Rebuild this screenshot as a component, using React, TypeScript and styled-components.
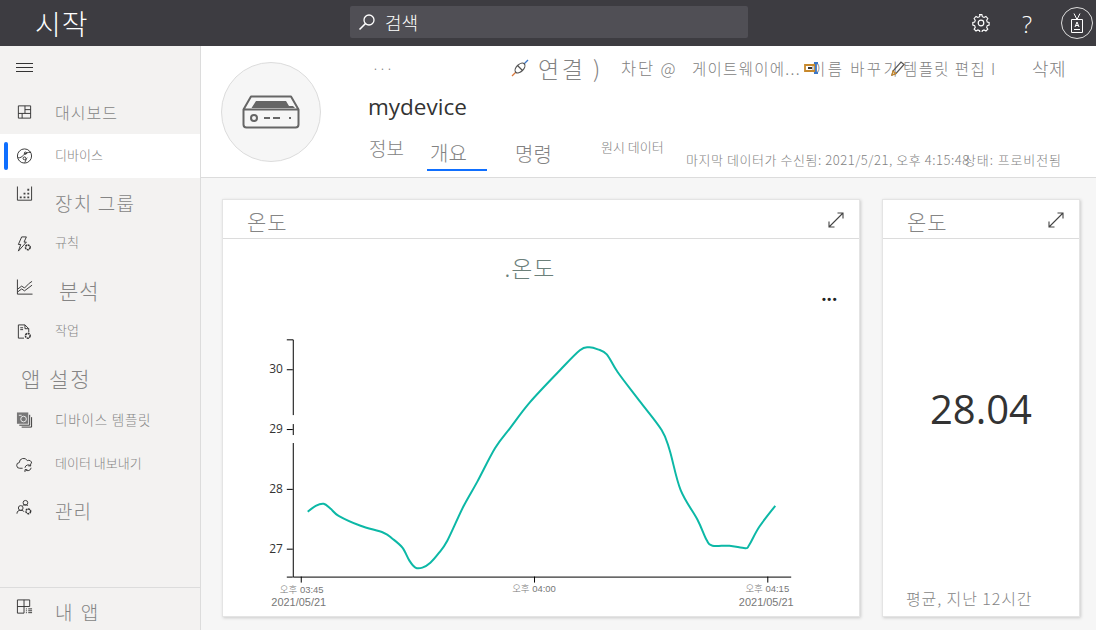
import styled, { createGlobalStyle } from "styled-components";

const KO = `"Noto Sans CJK KR", "Open Sans", sans-serif`;

const GlobalStyle = createGlobalStyle`
  html, body {
    margin: 0;
    height: 100%;
    overflow: hidden;
    font-family: ${KO};
    font-weight: 300;
  }
  * { box-sizing: border-box; }
`;

// chart line, read off the screenshot
const points: [number, number][] = [
  [307, 512], [315, 506], [323, 504], [330, 509], [338, 516], [360, 526], [383, 533],
  [392, 539], [402, 548], [409, 561], [415, 568], [422, 568], [430, 563], [438, 554],
  [447, 541], [463, 507], [477, 482], [495, 448], [510, 428], [530, 402], [560, 370],
  [580, 350], [589, 347], [598, 349], [607, 354], [618, 372], [640, 401], [662, 430],
  [670, 450], [681, 490], [698, 520], [707, 540], [713, 546], [730, 546], [746, 548.5],
  [750, 545], [760, 527], [776, 506],
];

const makeLine = (pts: [number, number][]) => {
  let d = `M${pts[0][0]} ${pts[0][1]}`;
  for (let i = 0; i < pts.length - 1; i++) {
    const p0 = pts[Math.max(i - 1, 0)];
    const p1 = pts[i];
    const p2 = pts[i + 1];
    const p3 = pts[Math.min(i + 2, pts.length - 1)];
    const c1x = p1[0] + (p2[0] - p0[0]) / 6;
    const c1y = p1[1] + (p2[1] - p0[1]) / 6;
    const c2x = p2[0] - (p3[0] - p1[0]) / 6;
    const c2y = p2[1] - (p3[1] - p1[1]) / 6;
    d += ` C${c1x} ${c1y} ${c2x} ${c2y} ${p2[0]} ${p2[1]}`;
  }
  return d;
};

const I = { fill: "none", stroke: "#333", strokeWidth: 1 };

const navIcons: Record<string, React.ReactNode> = {
  dashboard: (
    <svg width="18" height="18" viewBox="0 0 18 18" {...I}>
      <path d="M2.5 2.5h13v13h-13zM2.5 10.5h13M9.5 2.5v8M6.5 10.5v5M9.5 6.5h6" />
    </svg>
  ),
  device: (
    <svg width="18" height="18" viewBox="0 0 18 18" {...I}>
      <circle cx="9" cy="9" r="7.5" />
      <path d="M2 11c3 0 4-1 6-3s4-3 8-3M9 16c2-2 1-4 3-5" />
      <circle cx="9" cy="11.5" r="1.5" />
      <circle cx="10" cy="6" r="1.2" />
    </svg>
  ),
  groups: (
    <svg width="18" height="18" viewBox="0 0 18 18" {...I}>
      <path d="M1.5 0v14.5h15V0" />
      <path d="M4 10.5h2v2H4zM8 10.5h2v2H8zM12 10.5h2v2h-2zM8 6.5h2v2H8zM12 6.5h2v2h-2zM12 2.5h2v2h-2z" fill="#444" stroke="none" />
    </svg>
  ),
  rules: (
    <svg width="18" height="18" viewBox="0 0 18 18" {...I}>
      <path d="M6 1.5h5L8.5 7H11L2.5 16.5 5 9.5H2.5z" />
      <circle cx="12.5" cy="12.5" r="2.5" strokeWidth="1.6" strokeDasharray="2 .6" />
    </svg>
  ),
  analytics: (
    <svg width="18" height="18" viewBox="0 0 18 18" {...I}>
      <path d="M1.5 0v15.5h16" />
      <path d="M2 10l4-3 3 2 5-5 3-2M2 13l4-3 3 2 8-6" />
    </svg>
  ),
  jobs: (
    <svg width="18" height="18" viewBox="0 0 18 18" {...I}>
      <path d="M2.5 15.5v-14h7l4 4v4M2.5 15.5h6M9.5 1.5v4h4M4.5 4.5h3M4.5 6.5h3" />
      <circle cx="12.5" cy="13" r="2.5" strokeWidth="1.6" strokeDasharray="2 .6" />
    </svg>
  ),
  templates: (
    <svg width="18" height="18" viewBox="0 0 18 18" {...I}>
      <rect x="1" y="1" width="12" height="12" fill="#777" stroke="none" />
      <path d="M14.5 3.5v11h-11M16.5 6v10.5H6" />
      <circle cx="8" cy="8" r="3" stroke="#eee" />
      <path d="M3 4h3" stroke="#eee" />
    </svg>
  ),
  exports: (
    <svg width="18" height="18" viewBox="0 0 18 18" {...I}>
      <path d="M7 13.5H4a3 3 0 0 1-.5-6A4.5 4.5 0 0 1 12 5.5a3 3 0 0 1 4.5 3" />
      <path d="M9.5 13a3.5 3.5 0 0 1 6-2M16 13a3.5 3.5 0 0 1-6 2M15.5 8.5V11H13M9.5 17.5V15H12" />
    </svg>
  ),
  admin: (
    <svg width="18" height="18" viewBox="0 0 18 18" {...I}>
      <circle cx="10" cy="3.5" r="2.5" />
      <circle cx="5" cy="9" r="2.5" />
      <path d="M1 15c0-3 2-3.500 4-3.500s3 .5 3.500 1.500M7 6.500c1-1 4-1.500 5.500 0" />
      <circle cx="13" cy="12.500" r="2.500" strokeWidth="1.6" strokeDasharray="2 .6" />
    </svg>
  ),
  apps: (
    <svg width="18" height="18" viewBox="0 0 18 18" {...I}>
      <path d="M1.500 1.500h13v7M1.500 1.500v14h7M1.500 8.500h13M8.500 1.500v14" />
      <path d="M10.500 11h1M10.500 13h1M10.500 15h1M13 11h4M13 13h4M13 15h4" />
    </svg>
  ),
};

const navItems = [
  { key: "dashboard", label: "대시보드", size: 16, spacing: 1, shift: 1 },
  { key: "device", label: "디바이스", size: 13, spacing: 0, shift: -1, active: true },
  { key: "groups", label: "장치 그룹", size: 19, spacing: 1.2, shift: 3, iconShift: -5 },
  { key: "rules", label: "규칙", size: 13, spacing: 0, shift: -2 },
  { key: "analytics", label: "분석", size: 21, spacing: 1, shift: 3, indent: 4 },
  { key: "jobs", label: "작업", size: 13, spacing: 0, shift: -2 },
  { heading: true, key: "settings", label: "앱 설정", size: 21, spacing: 2, shift: 3 },
  { key: "templates", label: "디바이스 템플릿", size: 13.5, spacing: 0.8, shift: 0 },
  { key: "exports", label: "데이터 내보내기", size: 13, spacing: 0, shift: -1 },
  { key: "admin", label: "관리", size: 19, spacing: 1, shift: 3 },
];

const App = () => {
  return (
    <Page>
      <GlobalStyle />
      <TopBar>
        <AppTitle>시작</AppTitle>
        <SearchBox>
          <svg width="18" height="18" viewBox="0 0 18 18" fill="none" stroke="#fff" strokeWidth="1.3">
            <circle cx="11" cy="7" r="5" />
            <path d="M7.500 10.500L1.500 16.500" strokeWidth="1.600" />
          </svg>
          <span>검색</span>
        </SearchBox>
        <TopActions>
          <svg width="18" height="18" viewBox="0 0 18 18" fill="none" stroke="#fff" strokeWidth="1.200">
            <circle cx="9" cy="9" r="2.800" />
            <path d="M7.500 1.200h3l.5 2.200 1.800.8 2-1.100 2 2.200-1.200 1.900.6 1.800 2 .6v2.700l-2 .6-.6 1.800 1.200 1.900-2 2-2-1.100-1.800.8-.5 2.200" transform="translate(0 -.5) scale(.94)" />
            <path d="M7.500 1.200l-.5 2.200-1.800.8-2-1.100-2 2.200 1.200 1.900-.6 1.800-2 .6v2.700l2 .6.6 1.800-1.200 1.900 2 2 2-1.100 1.800.8.500 2.200h3" transform="translate(1 -.5) scale(.94)" />
          </svg>
          <HelpMark>?</HelpMark>
          <UserBadge>
            <svg width="14" height="20" viewBox="0 0 14 20" fill="none" stroke="#fff" strokeWidth="1">
              <path d="M1.500 6.500h11v13h-11zM4 .500l3 6 3-6" />
              <path d="M5 14l2-5 2 5M5.800 12.500h2.400M4 16.500h6" />
            </svg>
          </UserBadge>
        </TopActions>
      </TopBar>

      <Body>
        <Sidebar>
          <MenuToggle>
            <svg width="17" height="10" viewBox="0 0 17 10" stroke="#333" strokeWidth="1">
              <path d="M0 .5h17M0 4.500h17M0 8.500h17" />
            </svg>
          </MenuToggle>
          {navItems.map((item) => (
            <NavRow key={item.key} $active={item.active} $heading={item.heading}>
              {!item.heading && (
                <NavIcon $shift={item.iconShift ?? 0}>{navIcons[item.key]}</NavIcon>
              )}
              <NavLabel
                $size={item.size}
                $spacing={item.spacing}
                $shift={item.shift}
                $indent={item.indent ?? 0}
              >
                {item.label}
              </NavLabel>
            </NavRow>
          ))}
          <SidebarFooter>
            <NavIcon $shift={-2}>{navIcons.apps}</NavIcon>
            <NavLabel $size={19} $spacing={2} $shift={3} $indent={0}>
              내 앱
            </NavLabel>
          </SidebarFooter>
        </Sidebar>

        <Main>
          <DeviceHeader>
            <Avatar>
              <svg width="58" height="34" viewBox="0 0 58 34" fill="none" stroke="#666" strokeWidth="2">
                <path d="M1.500 14.500L9 1.500h40l7.500 13v15a3 3 0 0 1-3 3h-49a3 3 0 0 1-3-3zM1.500 14.500h55" strokeLinejoin="round" />
                <path d="M9.500 13L14 6h30l3 5h4l2 2z" fill="#666" stroke="none" />
                <circle cx="12" cy="23" r="3" />
                <path d="M22 23h6M31 23h7M47 23h2" />
              </svg>
            </Avatar>
            <DeviceInfo>
              <Toolbar>
                <ToolItem $width={139} $size={13}>
                  ···
                </ToolItem>
                <ToolItem $width={110} $size={23} $spacing={2.5}>
                  <svg width="18" height="18" viewBox="0 0 18 18" fill="none" strokeWidth="1.200">
                    <path d="M1 17l4-4" stroke="#d9773a" />
                    <path d="M13 5l4-4" stroke="#3c78c8" />
                    <ellipse cx="9" cy="9" rx="6" ry="3.500" transform="rotate(-45 9 9)" stroke="#555" />
                    <path d="M6.500 6.500l5 5" stroke="#555" />
                  </svg>
                  <span>연결 )</span>
                </ToolItem>
                <ToolItem $width={71} $size={16.5} $spacing={1.8}>
                  차단 @
                </ToolItem>
                <ToolItem $width={112} $size={15.5} $spacing={1.3}>
                  게이트웨이에...
                </ToolItem>
                <ToolItem $width={87} $size={15.5} $spacing={2.4}>
                  <svg width="16" height="12" viewBox="0 0 16 12" fill="none" strokeWidth="1.800">
                    <path d="M1 3h10v6H1z" stroke="#c8892c" />
                    <path d="M4 6h4" stroke="#222" />
                    <path d="M12 1v10M10 1h4M10 11h4" stroke="#3c78c8" />
                  </svg>
                  <Overlapped $by={-9}>이름 바꾸기</Overlapped>
                </ToolItem>
                <ToolItem $width={141} $size={15.5} $spacing={1.4}>
                  <svg width="14" height="16" viewBox="0 0 14 16" fill="none" strokeWidth="1.200">
                    <path d="M1 15l1-4 8-9 3 2.500-8 9z" stroke="#555" />
                    <path d="M1 15l1-4 3 2.500z" stroke="#c8892c" />
                  </svg>
                  <Overlapped $by={-2}>템플릿 편집 I</Overlapped>
                </ToolItem>
                <ToolItem $width={40} $size={18} $spacing={0.5}>
                  삭제
                </ToolItem>
              </Toolbar>
              <DeviceName>mydevice</DeviceName>
              <Tabs>
                <Tab $width={59} $size={19} $top={8} $indent={1}>
                  정보
                </Tab>
                <Tab $width={60} $size={20} $top={12} $indent={3} $selected>
                  개요
                </Tab>
                <Tab $width={114} $size={20} $top={13} $indent={28}>
                  명령
                </Tab>
                <Tab $width={85} $size={13} $top={11} $indent={0}>
                  원시 데이터
                </Tab>
                <Tab $width={278} $size={13} $top={24} $indent={0} $spacing={0.55}>
                  마지막 데이터가 수신됨: 2021/5/21, 오후 4:15:48
                </Tab>
                <Tab $width={98} $size={13} $top={24} $indent={0} $spacing={0.9}>
                  상태: 프로비전됨
                </Tab>
              </Tabs>
            </DeviceInfo>
          </DeviceHeader>

          <CardArea>
            <ChartCard>
              <CardHeader>
                <CardTitle>온도</CardTitle>
                <ExpandIcon />
              </CardHeader>
              <ChartHeading>.온도</ChartHeading>
              <ChartMore>•••</ChartMore>
              <ChartSvg viewBox="222 280 638 337" width="636" height="337">
                <path d="M286 339.500h6.500V415M292.500 424v11M292.500 443v134.500H792" fill="none" stroke="#000" />
                <path d="M286 369.500h6M286 429.500h6M286 489.500h6M286 549.500h6M286 577.500h6M300.500 577v6M534.500 577v6M768.500 577v6" stroke="#000" />
                <g fontFamily="'Open Sans', sans-serif" fontSize="12" fill="#333" textAnchor="end" fontWeight="400">
                  <text x="282" y="373">30</text>
                  <text x="282" y="433">29</text>
                  <text x="282" y="493">28</text>
                  <text x="282" y="553">27</text>
                </g>
                <g fontSize="9.500" fill="#777" textAnchor="middle" fontFamily={`"Liberation Sans", "Noto Sans CJK KR", sans-serif`}>
                  <text x="301" y="593">오후 03:45</text>
                  <text x="534" y="592">오후 04:00</text>
                  <text x="768" y="592">오후 04:15</text>
                </g>
                <g fontSize="11" fill="#777" textAnchor="middle" fontFamily={`"Liberation Sans", sans-serif`}>
                  <text x="298" y="607">2021/05/21</text>
                  <text x="767" y="607">2021/05/21</text>
                </g>
                <path d={makeLine(points)} fill="none" stroke="#0cb8a6" strokeWidth="2" />
              </ChartSvg>
            </ChartCard>

            <StatCard>
              <CardHeader>
                <CardTitle>온도</CardTitle>
                <ExpandIcon />
              </CardHeader>
              <StatValue>28.04</StatValue>
              <StatNote>평균, 지난 12시간</StatNote>
            </StatCard>
          </CardArea>
        </Main>
      </Body>
    </Page>
  );
};

const ExpandIcon = () => (
  <ExpandButton>
    <svg width="16" height="16" viewBox="0 0 16 16" fill="none" stroke="#444" strokeWidth="1.100">
      <path d="M1 15L15 1M9.500 1H15v5.500M1 9.500V15h5.500" />
    </svg>
  </ExpandButton>
);

export default App;

const Page = styled.div`
  width: 1096px;
  height: 630px;
  display: flex;
  flex-direction: column;
  overflow: hidden;
  background: #fff;
`;

const TopBar = styled.header`
  height: 46px;
  flex: none;
  display: flex;
  align-items: center;
  background: #3d3c41;
  color: #fff;
`;

const AppTitle = styled.div`
  width: 350px;
  padding-left: 35px;
  font-size: 28px;
  letter-spacing: 1px;
  line-height: 46px;
  margin-top: -1px;
`;

const SearchBox = styled.div`
  width: 398px;
  height: 32px;
  margin-top: -2px;
  display: flex;
  align-items: center;
  gap: 9px;
  padding-left: 8px;
  border-radius: 2px;
  background: #504f55;
  font-size: 18px;
`;

const TopActions = styled.div`
  flex: 1;
  display: flex;
  align-items: center;
  padding-left: 224px;
`;

const HelpMark = styled.span`
  margin-left: 32px;
  font-family: "Open Sans", sans-serif;
  font-size: 24px;
  width: 30px;
`;

const UserBadge = styled.div`
  width: 32px;
  height: 32px;
  margin-left: 9px;
  border: 1px solid #ddd;
  border-radius: 50%;
  display: flex;
  align-items: center;
  justify-content: center;
`;

const Body = styled.div`
  flex: 1;
  display: flex;
  min-height: 0;
`;

const Sidebar = styled.nav`
  width: 201px;
  flex: none;
  display: flex;
  flex-direction: column;
  background: #f3f2f1;
  border-right: 1px solid #dcdcdc;
`;

const MenuToggle = styled.div`
  height: 44px;
  flex: none;
  display: flex;
  align-items: center;
  padding-left: 16px;
`;

const NavRow = styled.div<{ $active?: boolean; $heading?: boolean }>`
  position: relative;
  height: 44px;
  flex: none;
  display: flex;
  align-items: center;
  gap: 22px;
  padding-left: ${(p) => (p.$heading ? 21 : 16)}px;
  background: ${(p) => (p.$active ? "#fff" : "transparent")};

  ${(p) =>
    p.$active &&
    `&::before {
      content: "";
      position: absolute;
      left: 4px;
      top: 8px;
      width: 4px;
      height: 28px;
      border-radius: 2px;
      background: #0f6fff;
    }`}
`;

const NavIcon = styled.span<{ $shift: number }>`
  width: 17px;
  height: 18px;
  flex: none;
  display: flex;
  margin-top: ${(p) => p.$shift * 2}px;
`;

const NavLabel = styled.span<{ $size: number; $spacing: number; $shift: number; $indent: number }>`
  font-size: ${(p) => p.$size}px;
  letter-spacing: ${(p) => p.$spacing}px;
  margin-top: ${(p) => p.$shift * 2 - 2}px;
  margin-left: ${(p) => p.$indent}px;
  color: #858585;
  white-space: nowrap;
`;

const SidebarFooter = styled.div`
  margin-top: auto;
  height: 43px;
  flex: none;
  display: flex;
  align-items: center;
  gap: 22px;
  padding-left: 16px;
  border-top: 1px solid #dcdcdc;
`;

const Main = styled.main`
  flex: 1;
  min-width: 0;
  display: flex;
  flex-direction: column;
`;

const DeviceHeader = styled.section`
  height: 132px;
  flex: none;
  display: flex;
  padding: 16px 0 0 20px;
  border-bottom: 1px solid #dcdcdc;
`;

const Avatar = styled.div`
  width: 100px;
  height: 100px;
  flex: none;
  display: flex;
  align-items: center;
  justify-content: center;
  border-radius: 50%;
  border: 1px solid #dcdcdc;
  background: #f6f6f6;
`;

const DeviceInfo = styled.div`
  margin: -16px 0 0 47px;
  min-width: 0;
  flex: 1;
`;

const Toolbar = styled.div`
  height: 44px;
  display: flex;
  align-items: center;
  padding-left: 4px;
`;

const ToolItem = styled.div<{ $width: number; $size: number; $spacing?: number }>`
  width: ${(p) => p.$width}px;
  flex: none;
  display: flex;
  align-items: center;
  gap: 9px;
  font-size: ${(p) => p.$size}px;
  letter-spacing: ${(p) => p.$spacing ?? 0}px;
  color: #828282;
  white-space: nowrap;

  svg {
    position: relative;
    z-index: 1;
    flex: none;
  }
`;

const Overlapped = styled.span<{ $by: number }>`
  margin-left: ${(p) => p.$by - 9}px;
`;

const DeviceName = styled.div`
  height: 36px;
  font-family: "Open Sans", sans-serif;
  font-size: 22.5px;
  font-weight: 400;
  line-height: 34px;
  color: #333;
`;

const Tabs = styled.div`
  display: flex;
  align-items: flex-start;
  height: 51px;
`;

const Tab = styled.div<{
  $width: number;
  $size: number;
  $top: number;
  $indent: number;
  $spacing?: number;
  $selected?: boolean;
}>`
  position: relative;
  width: ${(p) => p.$width}px;
  flex: none;
  padding: ${(p) => p.$top}px 0 0 ${(p) => p.$indent}px;
  font-size: ${(p) => p.$size}px;
  letter-spacing: ${(p) => p.$spacing ?? 0}px;
  color: #828282;
  white-space: nowrap;

  ${(p) =>
    p.$selected &&
    `&::after {
      content: "";
      position: absolute;
      left: 0;
      top: 43px;
      width: 60px;
      height: 2px;
      background: #0f6fff;
    }`}
`;

const CardArea = styled.div`
  flex: 1;
  min-height: 0;
  display: flex;
  gap: 22px;
  padding: 21px 0 13px 21px;
  background: #f6f6f6;
`;

const Card = styled.article`
  position: relative;
  display: flex;
  flex-direction: column;
  background: #fff;
  border: 1px solid #e4e4e4;
  box-shadow: 1px 1px 3px rgba(0, 0, 0, 0.18);
`;

const ChartCard = styled(Card)`
  width: 638px;
`;

const StatCard = styled(Card)`
  width: 198px;
`;

const CardHeader = styled.div`
  position: relative;
  height: 39px;
  flex: none;
  padding-left: 24px;
  border-bottom: 1px solid #dcdcdc;
`;

const CardTitle = styled.div`
  font-size: 21px;
  letter-spacing: 1px;
  line-height: 43px;
  color: #858585;
`;

const ExpandButton = styled.span`
  position: absolute;
  right: 15px;
  top: 12px;
  display: flex;
`;

const ChartHeading = styled.div`
  height: 41px;
  padding-right: 22px;
  text-align: center;
  font-size: 23px;
  line-height: 56px;
  letter-spacing: 1px;
  color: #6c807a;
`;

const ChartMore = styled.span`
  position: absolute;
  right: 21px;
  top: 93px;
  font-family: "Liberation Sans", sans-serif;
  font-size: 11px;
  font-weight: 700;
  letter-spacing: 1.5px;
  color: #222;
`;

const ChartSvg = styled.svg`
  display: block;
  overflow: visible;
`;

const StatValue = styled.div`
  flex: 1;
  display: flex;
  align-items: center;
  justify-content: center;
  padding-bottom: 8px;
  font-family: "Open Sans", sans-serif;
  font-size: 40px;
  font-weight: 400;
  color: #333;
`;

const StatNote = styled.div`
  padding: 0 0 6px 23px;
  font-size: 16px;
  letter-spacing: 0.9px;
  color: #858585;
`;
